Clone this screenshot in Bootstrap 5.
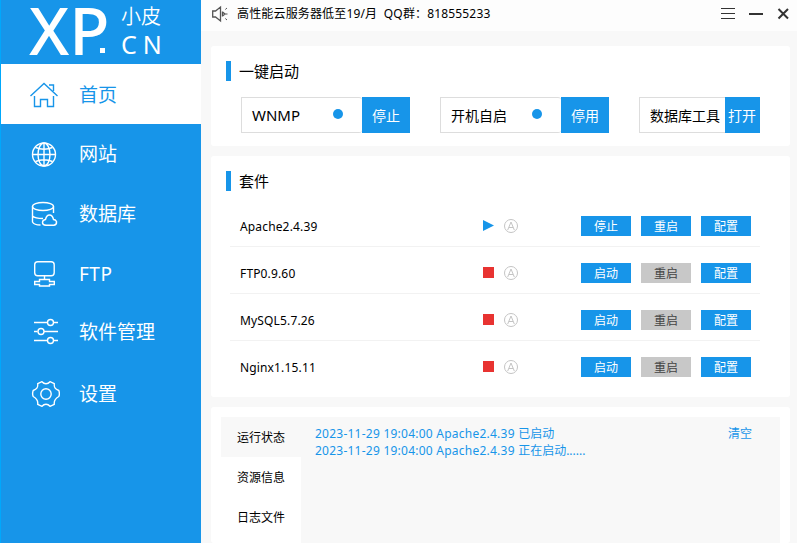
<!DOCTYPE html>
<html lang="zh-CN">
<head>
<meta charset="utf-8">
<meta name="viewport" content="width=device-width, initial-scale=1">
<title>小皮面板</title>
<link href="https://cdn.jsdelivr.net/npm/bootstrap@5.3.0/dist/css/bootstrap.min.css" rel="stylesheet">
<style>
:root{--xp:#1795e9}
body{font-family:"Noto Sans","Noto Sans CJK SC",sans-serif;font-size:12px;line-height:17px;color:#000;background:#f8f8f8;height:543px;overflow:hidden}
svg{display:block;flex:none}
.app{height:543px}
.side{width:201px;background:var(--xp);border-left:1px solid #00a8fc;flex:none}
.brand{height:64px;color:#fff;padding-left:28px}
.brand-xp{font:500 66px/58px "Noto Sans",sans-serif;width:82px;white-space:nowrap;flex:none}
.brand-dot{width:5px;height:5px;background:#fff;margin:48px 0 0 -11px;flex:none}
.brand-sub{font-size:20px;line-height:28px;padding:3px 0 0 16px;white-space:nowrap}
.brand-top{font-weight:350}
.brand-cn{font-family:"Noto Sans",sans-serif;font-size:25px;line-height:27px;font-weight:400;letter-spacing:6px}
.side .nav-link{height:60px;padding:0 0 0 29px;color:#fff;font-size:19px;line-height:28px;border-radius:0}
.side .nav-link svg{width:30px;height:30px;margin-right:19px;fill:none;stroke:currentColor;stroke-width:1.4}
.side .nav-link.active{background:#fff;color:var(--xp)}
.side .nav-link.active span{padding-top:2px}
.side .nav-link.lifted{padding-bottom:4px}
.ls{letter-spacing:.5px}
.topbar{height:31px;background:#fdfdfd;padding:0 7px 4px 11px}
.notice{margin-left:7px;letter-spacing:.16px}
.panel{background:#fff;border-radius:3px;width:579px;margin-left:10px}
.ttl{font-size:15px;line-height:20px;border-left:5px solid var(--xp);padding-left:8px;margin:0;font-weight:400}
.combos{margin:16px 0 0 15px;gap:30px}
.combo{height:36px;font-size:14px}
.combo-box{border:1px solid #ddd;border-right:0;border-radius:0 3px 3px 0;width:121px;padding:0 19px 0 10px}
.combo-box .latin{font-size:15px}
.combo-box.tool{width:86px;padding:0 0 0 10px;border-radius:0;white-space:nowrap}
.dot{width:10px;height:10px;border-radius:50%;background:var(--xp);margin-top:-3px}
.act{background:var(--xp);color:#fff;border:0;border-radius:0;padding:0}
.combo .act{width:48px;font-size:14px;padding-top:1px}
.combo .act.slim{width:35px;padding-right:1px}
#quick{margin-top:15px;padding:15px 0 0 15px;height:100px}
#suite{margin-top:10px;padding:15px 0 0 15px;height:241px}
.svcs{width:530px;margin:9px 0 0 4px}
.svc{height:47px;padding:5px 9px 0 10px;border-bottom:1px solid #f2f2f2}
.svc:last-child{border-color:transparent}
.svc-name{width:243px;padding-top:1px;letter-spacing:.15px}
.svc-name+svg{margin-top:-1px}
.auto{width:14px;height:14px;fill:none;stroke:#c4c4c4;margin-left:10px}
.svc .act{width:50px;height:20px;font-size:12px;line-height:19px;padding-top:1px}
.svc .act+.act{margin-left:10px}
.svc .act.off{background:#c8c8c8;color:#444}
#status{margin-top:10px;padding:10px 10px 0 10px;height:136px}
.logbox{background:#f8f8f8;color:var(--xp)}
.tabs{width:80px;background:#fff}
.tabs .t{height:40px;padding:1px 0 0 16px;line-height:40px;color:#000}
.tabs .t.on{background:#f8f8f8}
.log{padding:8px 0 0 14px}
.log .en{letter-spacing:.24px}
.clear{padding:8px 28px 0 0}
</style>
<script src="https://cdn.jsdelivr.net/npm/bootstrap@5.3.0/dist/js/bootstrap.bundle.min.js"></script>
</head>
<body>
<div class="app d-flex">
  <aside class="side">
    <div class="brand d-flex">
      <div class="brand-xp">XP</div><i class="brand-dot"></i>
      <div class="brand-sub"><div class="brand-top">小皮</div><div class="brand-cn">CN</div></div>
    </div>
    <nav class="nav flex-column">
      <a class="nav-link active d-flex align-items-center"><svg viewBox="0 0 30 30"><path d="M.5 17 14 4.500 27.500 17M4.500 17V27.500H10.500V20.500H17.500V27.500H23.500V17M19 6H23.500V12"/></svg><span>首页</span></a>
      <a class="nav-link d-flex align-items-center"><svg viewBox="0 0 30 30"><circle cx="14" cy="15.500" r="11.500"/><ellipse cx="14" cy="15.500" rx="6" ry="11.500"/><path d="M14 4V27M2.500 15.500H25.500M5.500 8.500Q14 12 22.500 8.500M5.500 22.500Q14 19 22.500 22.500"/></svg><span>网站</span></a>
      <a class="nav-link d-flex align-items-center"><svg viewBox="0 0 30 30"><ellipse cx="13" cy="7.500" rx="10.500" ry="4"/><path d="M2.500 7.500V23Q4 26 10.500 26M23.500 7.500V14M2.500 17Q5 19.500 13 19.500M16 26.300H24Q27 25.500 26.500 22.500Q25.500 20.500 23.500 20.500Q22.500 16 19.500 16T15.500 20.500Q12.500 21 12.500 23.500T16 26.300Z"/></svg><span>数据库</span></a>
      <a class="nav-link d-flex align-items-center"><svg viewBox="0 0 30 30"><rect x="4.700" y="2.700" width="19.500" height="14" rx="3"/><path d="M14.500 17V20.500M9.500 20.500H19.500V22.500H24.300V25.500H19.500V27H9.500V25.500H4.700V22.500H9.500Z"/></svg><span class="ls">FTP</span></a>
      <a class="nav-link lifted d-flex align-items-center"><svg viewBox="0 0 30 30"><path d="M4 5.500H17M23 5.500H28M4 14.500H7.500M14 14.500H28M4 23.500H17M23 23.500H28"/><circle cx="20.500" cy="5.500" r="3"/><circle cx="11" cy="14.500" r="3"/><circle cx="20.500" cy="23.500" r="3"/></svg><span>软件管理</span></a>
      <a class="nav-link d-flex align-items-center"><svg viewBox="0 0 30 30"><circle cx="16" cy="15" r="5.200"/><path d="M12 2.700Q13.700 4.700 16 4.700T20 2.700L24.300 4.600C23.800 8.500 25 10 28.800 11.500Q30 15 28.800 17.500C25 19.500 23.800 21.500 24.300 25.400L20 27.300Q18.300 25.300 16 25.300T12 27.300L7.700 25.400C8.200 21.500 7 19.500 3.200 17.500Q2 15 3.200 11.500C7 10 8.200 8.500 7.700 4.600Z" stroke-linejoin="round"/></svg><span>设置</span></a>
    </nav>
  </aside>
  <main class="flex-grow-1">
    <header class="topbar d-flex align-items-center">
      <svg width="18" height="18" viewBox="0 0 18 18" fill="none" stroke="#555" stroke-width="1.300"><path d="M.7 6H3.500L8.500 2V16L3.500 12H.7ZM10.500 6.500V11.500M10.500 7 13 9 10.500 11"/><path d="M13.500 9H15.500M13.300 4.500 15 3M13.300 13.500 15 15" stroke-width="1"/></svg>
      <span class="notice me-auto">高性能云服务器低至19/月&nbsp; QQ群：818555233</span>
      <svg width="70" height="14" viewBox="0 0 70 14" fill="none" stroke="#333"><path d="M1 1.500H15M1 6.500H15M1 11.500H15"/><path d="M29 7H43" stroke-width="2"/><path d="M58.500 2 68 11.500M68 2 58.500 11.500" stroke-width="2"/></svg>
    </header>
    <section class="panel" id="quick">
      <h2 class="ttl">一键启动</h2>
      <div class="d-flex combos">
        <div class="combo d-flex"><div class="combo-box d-flex align-items-center justify-content-between"><span class="latin">WNMP</span><i class="dot"></i></div><button class="act">停止</button></div>
        <div class="combo d-flex"><div class="combo-box d-flex align-items-center justify-content-between"><span>开机自启</span><i class="dot"></i></div><button class="act">停用</button></div>
        <div class="combo d-flex"><div class="combo-box tool d-flex align-items-center"><span>数据库工具</span></div><button class="act slim">打开</button></div>
      </div>
    </section>
    <section class="panel" id="suite">
      <h2 class="ttl">套件</h2>
      <div class="svcs">
        <div class="svc d-flex align-items-center"><span class="svc-name">Apache2.4.39</span><svg width="11" height="11"><path d="M0 0 11 5.500 0 11Z" fill="#1795e9"/></svg><svg class="auto" viewBox="0 0 14 14"><circle cx="7" cy="7" r="6.500"/><path d="M3.700 11 7 3 10.300 11M5 8.500H9"/></svg><button class="act ms-auto">停止</button><button class="act">重启</button><button class="act">配置</button></div>
        <div class="svc d-flex align-items-center"><span class="svc-name">FTP0.9.60</span><svg width="11" height="11"><path d="M0 0H11V11H0Z" fill="#e83331"/></svg><svg class="auto" viewBox="0 0 14 14"><circle cx="7" cy="7" r="6.500"/><path d="M3.700 11 7 3 10.300 11M5 8.500H9"/></svg><button class="act ms-auto">启动</button><button class="act off">重启</button><button class="act">配置</button></div>
        <div class="svc d-flex align-items-center"><span class="svc-name">MySQL5.7.26</span><svg width="11" height="11"><path d="M0 0H11V11H0Z" fill="#e83331"/></svg><svg class="auto" viewBox="0 0 14 14"><circle cx="7" cy="7" r="6.500"/><path d="M3.700 11 7 3 10.300 11M5 8.500H9"/></svg><button class="act ms-auto">启动</button><button class="act off">重启</button><button class="act">配置</button></div>
        <div class="svc d-flex align-items-center"><span class="svc-name">Nginx1.15.11</span><svg width="11" height="11"><path d="M0 0H11V11H0Z" fill="#e83331"/></svg><svg class="auto" viewBox="0 0 14 14"><circle cx="7" cy="7" r="6.500"/><path d="M3.700 11 7 3 10.300 11M5 8.500H9"/></svg><button class="act ms-auto">启动</button><button class="act off">重启</button><button class="act">配置</button></div>
      </div>
    </section>
    <section class="panel" id="status">
      <div class="logbox d-flex h-100">
        <div class="tabs"><div class="t on">运行状态</div><div class="t">资源信息</div><div class="t">日志文件</div></div>
        <div class="log flex-grow-1"><div><span class="en">2023-11-29 19:04:00 Apache2.4.39 </span>已启动</div><div><span class="en">2023-11-29 19:04:00 Apache2.4.39 </span>正在启动......</div></div>
        <span class="clear">清空</span>
      </div>
    </section>
  </main>
</div>
</body>
</html>
